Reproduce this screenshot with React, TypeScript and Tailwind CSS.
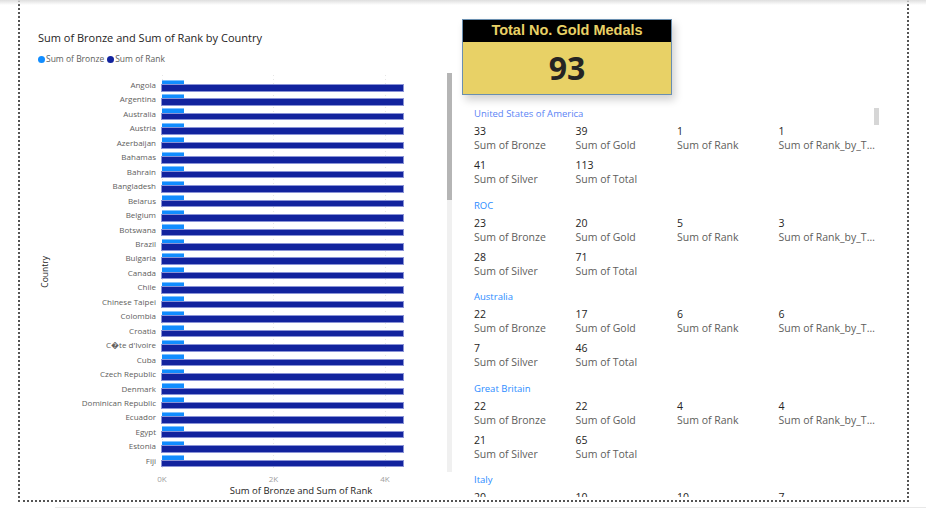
import React from 'react';

const countries = [
  'Angola', 'Argentina', 'Australia', 'Austria', 'Azerbaijan', 'Bahamas', 'Bahrain',
  'Bangladesh', 'Belarus', 'Belgium', 'Botswana', 'Brazil', 'Bulgaria', 'Canada',
  'Chile', 'Chinese Taipei', 'Colombia', 'Croatia', 'C\uFFFDte d\'Ivoire', 'Cuba',
  'Czech Republic', 'Denmark', 'Dominican Republic', 'Ecuador', 'Egypt', 'Estonia', 'Fiji',
];

const records = [
  { name: 'United States of America', color: 'text-[#5b84f5]', v: ['33', '39', '1', '1', '41', '113'] },
  { name: 'ROC', color: 'text-[#2b8cff]', v: ['23', '20', '5', '3', '28', '71'] },
  { name: 'Australia', color: 'text-[#2b8cff]', v: ['22', '17', '6', '6', '7', '46'] },
  { name: 'Great Britain', color: 'text-[#2b8cff]', v: ['22', '22', '4', '4', '21', '65'] },
  { name: 'Italy', color: 'text-[#2b8cff]', v: ['20', '10', '10', '7', '10', '40'] },
];

const labels = ['Sum of Bronze', 'Sum of Gold', 'Sum of Rank', 'Sum of Rank_by_T\u2026', 'Sum of Silver', 'Sum of Total'];

const Cell = ({ value, label }: { value: string; label: string }) => (
  <div className="w-[101.5px]">
    <div className="text-[10.5px] leading-[14px] text-[#252423]">{value}</div>
    <div className="text-[10.5px] leading-[14px] text-[#605e5c] whitespace-nowrap">{label}</div>
  </div>
);

const Record = ({ r }: { r: (typeof records)[number] }) => (
  <div className="flex mb-[13.5px] shrink-0">
    <div className="w-[2px] h-[78px] bg-[#c8c6c4]" />
    <div className="pl-[7px]">
      <div className={`text-[9.5px] leading-[12px] ${r.color}`}>{r.name}</div>
      <div className="pt-[4px] flex flex-col gap-[6px]">
        <div className="flex">
          {[0, 1, 2, 3].map((i) => <Cell key={i} value={r.v[i]} label={labels[i]} />)}
        </div>
        <div className="flex">
          {[4, 5].map((i) => <Cell key={i} value={r.v[i]} label={labels[i]} />)}
        </div>
      </div>
    </div>
  </div>
);

export default function App() {
  return (
    <div className="w-[926px] h-[510px] bg-white relative overflow-hidden font-['Open_Sans',sans-serif]">
      <div className="ml-[18px] w-[891px] h-[502px] border-x-2 border-b-2 border-dotted border-[#555] flex">
        {/* chart panel */}
        <div className="w-[440px] pl-[18px] pt-[31px]">
          <div className="text-[11px] leading-[14px] text-[#252423]">Sum of Bronze and Sum of Rank by Country</div>
          <div className="mt-[9px] flex items-center h-[10px] text-[8.5px] text-[#605e5c]">
            <span className="w-[7px] h-[7px] rounded-full bg-[#118dff]" />
            <span className="ml-[1px] mr-[3px]">Sum of Bronze</span>
            <span className="w-[7px] h-[7px] rounded-full bg-[#12239e]" />
            <span className="ml-[1px]">Sum of Rank</span>
          </div>
          <div className="mt-[9px] flex">
            <div className="w-[14px] h-[397px] flex items-center justify-center">
              <span className="[writing-mode:vertical-rl] rotate-180 text-[8.5px] text-[#252423]">Country</span>
            </div>
            <div className="flex flex-col">
              <div className="relative pt-[4.8px]">
                <svg className="absolute left-[110px] top-0" width="250" height="398">
                  <line x1="0.5" y1="2" x2="0.5" y2="398" stroke="#e6e6e6" strokeDasharray="1 3" />
                  <line x1="111.5" y1="2" x2="111.5" y2="398" stroke="#e6e6e6" strokeDasharray="1 3" />
                  <line x1="223.5" y1="2" x2="223.5" y2="398" stroke="#e6e6e6" strokeDasharray="1 3" />
                </svg>
                {countries.map((c) => (
                  <div key={c} className="relative flex items-center h-[14.46px]">
                    <div className="w-[104px] text-right text-[8px] leading-[10px] text-[#605e5c] whitespace-nowrap">{c}</div>
                    <div className="ml-[6px] flex flex-col">
                      <div className="w-[22px] h-[5.5px] bg-[#118dff] border-t border-[#7cc0ff]" />
                      <div className="w-[241px] h-[5.5px] bg-[#12239e] outline outline-1 outline-[#8a93d6]" />
                    </div>
                  </div>
                ))}
              </div>
              <div className="mt-[6px] ml-[100px] flex gap-[91.5px] text-[8px] leading-[10px] text-[#a0a0a0]">
                <span className="w-[20px] text-center">0K</span>
                <span className="w-[20px] text-center">2K</span>
                <span className="w-[20px] text-center">4K</span>
              </div>
              <div className="mt-[1px] ml-[110px] w-[278px] text-center text-[9.5px] leading-[12px] text-[#252423]">
                Sum of Bronze and Sum of Rank
              </div>
            </div>
            <div className="ml-[7px] w-[5px] h-[399px] bg-[#f0f0f0]">
              <div className="h-[127px] bg-[#b5b5b5]" />
            </div>
          </div>
        </div>

        {/* right panel */}
        <div className="flex-1 pl-[2px] pt-[19px]">
          <div className="w-[210px] h-[76px] border border-[#6a8fb0] shadow-[3px_5px_8px_rgba(0,0,0,0.18)] flex flex-col">
            <div className="h-[22px] bg-black flex items-center justify-center font-['Liberation_Sans',sans-serif] font-bold text-[14.5px] text-[#e8d166]">
              Total No. Gold Medals
            </div>
            <div className="flex-1 bg-[#e8d166] flex items-center justify-center font-['Open_Sans',sans-serif] font-bold text-[32px] leading-none text-[#252423]">
              93
            </div>
          </div>
          <div className="mt-[13px] ml-[5px] flex h-[389px] overflow-hidden">
            <div className="w-[407px] flex flex-col">
              {records.map((r) => <Record key={r.name} r={r} />)}
            </div>
            <div className="w-[5px] h-[17px] bg-[#d6d6d6]" />
          </div>
        </div>
      </div>
      <div className="ml-[55px] mt-[5px] h-px bg-[#e8e8e8]" />
      <div className="absolute top-0 left-0 w-full h-[5px] bg-gradient-to-b from-[#dedede] to-transparent" />
    </div>
  );
}
